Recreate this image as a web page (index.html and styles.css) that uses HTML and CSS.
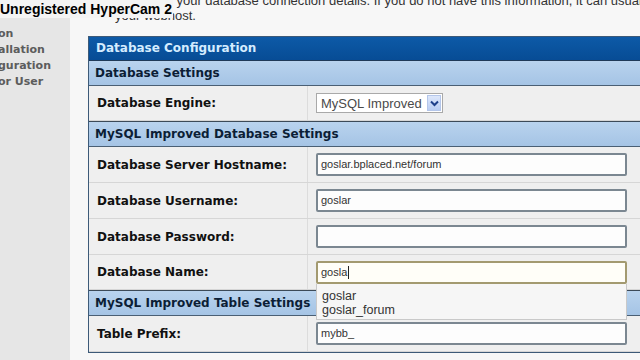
FILE: index.html
```html
<!DOCTYPE html>
<html lang="en">
<head>
    <meta charset="UTF-8">
    <title>MyBB Installation Wizard - Database Configuration</title>
    <link rel="stylesheet" href="styles.css">
</head>
<body>
    <div class="watermark">Unregistered HyperCam 2</div>
    <div class="page">
        <ul class="steps">
            <li>on</li>
            <li>allation</li>
            <li>guration</li>
            <li>or User</li>
        </ul>
        <div class="content">
            <p class="intro">Below are your database connection details. If you do not have this information, it can usually be obtained from<br>your webhost.</p>

            <div class="config">
                <div class="head">Database Configuration</div>
                <div class="subhead">Database Settings</div>
                <div class="row">
                    <div class="label">Database Engine:</div>
                    <div class="field">
                        <div class="select">
                            <span>MySQL Improved</span>
                            <span class="arrow">
                                <svg width="9" height="7" viewBox="0 0 9 7"><path d="M1 1.5 L4.5 5 L8 1.5" fill="none" stroke="#1d3f8a" stroke-width="2"/></svg>
                            </span>
                        </div>
                    </div>
                </div>
                <div class="subhead dark">MySQL Improved Database Settings</div>
                <div class="row tall">
                    <div class="label">Database Server Hostname:</div>
                    <div class="field"><div class="input">goslar.bplaced.net/forum</div></div>
                </div>
                <div class="row tall">
                    <div class="label">Database Username:</div>
                    <div class="field"><div class="input">goslar</div></div>
                </div>
                <div class="row tall">
                    <div class="label">Database Password:</div>
                    <div class="field"><div class="input"></div></div>
                </div>
                <div class="row">
                    <div class="label">Database Name:</div>
                    <div class="field">
                        <div class="input focus">gosla<span class="caret"></span></div>
                        <div class="suggest">
                            <div>goslar</div>
                            <div>goslar_forum</div>
                        </div>
                    </div>
                </div>
                <div class="subhead dark">MySQL Improved Table Settings</div>
                <div class="row tall">
                    <div class="label">Table Prefix:</div>
                    <div class="field"><div class="input">mybb_</div></div>
                </div>
            </div>
        </div>
    </div>
</body>
</html>
```

FILE: styles.css
```css
body {
    margin: 0;
    background-color: #f7f7f7;
    font-family: "DejaVu Sans", Verdana, sans-serif;
    overflow: hidden;
}

.watermark {
    position: absolute;
    top: 0;
    left: 0;
    padding-right: 1px;
    font-family: "Liberation Sans", Arial, sans-serif;
    font-weight: bold;
    font-size: 14px;
    line-height: 18px;
    color: #000;
    background-color: #f4f4f4;
    z-index: 5;
}

.page {
    display: flex;
    height: 360px;
}

.steps {
    width: 70px;
    flex-shrink: 0;
    margin: 0;
    padding: 26px 0 0 0;
    list-style: none;
    background-color: #e6e6e6;
    overflow: hidden;
    white-space: nowrap;
}

.steps li {
    font-size: 11px;
    font-weight: bold;
    line-height: 16px;
    color: #5c5c5c;
    margin-left: -2px;
}

.content {
    flex: 1;
    padding-left: 18px;
    overflow: hidden;
}

.intro {
    margin: -7px 0 0 27px;
    width: 640px;
    font-family: "Liberation Sans", Arial, sans-serif;
    font-size: 13px;
    line-height: 15px;
    color: #333;
    white-space: nowrap;
}

.config {
    margin-top: 13px;
    width: 560px;
    border: 1px solid #3d5a78;
    border-right: none;
    background-color: #efefef;
}

.head {
    height: 23px;
    line-height: 23px;
    padding-left: 7px;
    font-size: 12px;
    font-weight: bold;
    color: #d4ecff;
    background: linear-gradient(#0d5aa7, #074c95);
    border-bottom: 1px solid #203a58;
}

.subhead {
    height: 24px;
    line-height: 24px;
    padding-left: 6px;
    font-size: 12px;
    font-weight: bold;
    color: #0c1e36;
    background: linear-gradient(#b9d3ee, #a5c4e5);
    border-bottom: 1px solid #4a5f74;
}

.subhead.dark {
    border-top: 1px solid #3c4a58;
}

.row {
    display: flex;
    height: 34px;
    border-bottom: 1px solid #d6d6d6;
}

.row.tall {
    height: 35px;
}

.label {
    width: 219px;
    padding-left: 8px;
    box-sizing: border-box;
    display: flex;
    align-items: center;
    font-size: 12px;
    font-weight: bold;
    color: #111;
    border-right: 1px solid #dcdcdc;
}

.field {
    flex: 1;
    display: flex;
    align-items: center;
    padding-left: 8px;
    position: relative;
}

.select {
    width: 127px;
    height: 20px;
    box-sizing: border-box;
    border: 1px solid #a9a9a9;
    background-color: #fff;
    display: flex;
    align-items: center;
    justify-content: space-between;
    padding: 0 1px 0 4px;
    font-family: "Liberation Sans", Arial, sans-serif;
    font-size: 13px;
    color: #4a4a4a;
}

.arrow {
    width: 14px;
    height: 16px;
    background: linear-gradient(#dde7fb, #b9cdf3);
    border: 1px solid #b4c6ea;
    box-sizing: border-box;
    display: flex;
    align-items: center;
    justify-content: center;
}

.input {
    width: 311px;
    height: 23px;
    box-sizing: border-box;
    border: 2px solid #7b8791;
    border-radius: 2px;
    background-color: #fdfdfd;
    padding: 0 3px;
    font-family: "Liberation Sans", Arial, sans-serif;
    font-size: 11px;
    line-height: 19px;
    color: #333;
}

.input.focus {
    border-color: #a39a70;
    background-color: #fffef8;
}

.caret {
    display: inline-block;
    width: 1px;
    height: 13px;
    margin-left: 1px;
    vertical-align: -3px;
    background-color: #222;
}

.suggest {
    position: absolute;
    top: 29px;
    left: 8px;
    width: 311px;
    box-sizing: border-box;
    padding: 5px 5px 2px;
    background-color: #f6f6f6;
    border: 1px solid #c9c9c9;
    border-top: none;
    font-family: "Liberation Sans", Arial, sans-serif;
    font-size: 12.5px;
    line-height: 14px;
    color: #333;
    z-index: 3;
}
```
